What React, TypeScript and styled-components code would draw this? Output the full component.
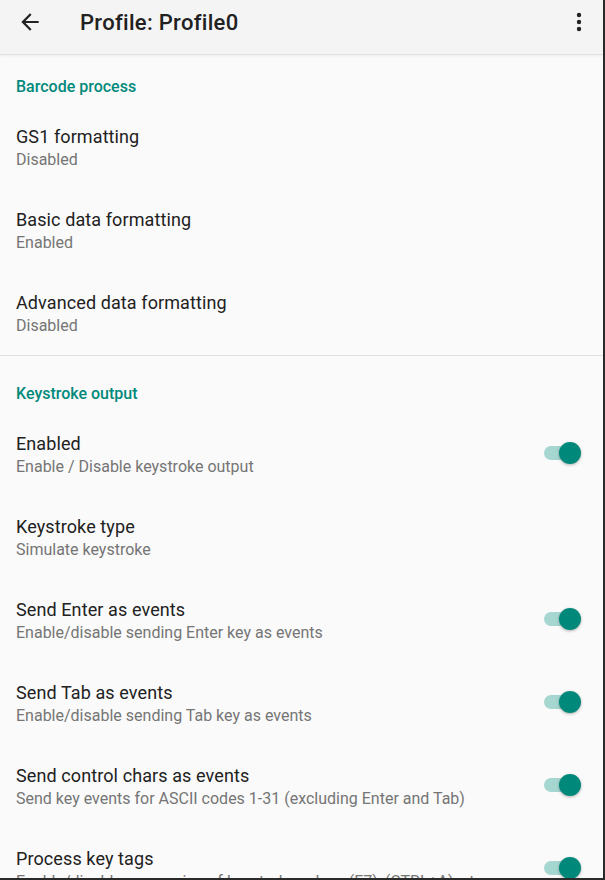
import React from "react";
import styled, { createGlobalStyle } from "styled-components";

const Global = createGlobalStyle`
  html, body { margin: 0; padding: 0; background: #fafafa; }
  body { font-family: Roboto, "Noto Sans", "Liberation Sans", sans-serif; -webkit-font-smoothing: antialiased; }
  * { box-sizing: border-box; }
`;

const Frame = styled.div`
  width: 605px;
  height: 880px;
  overflow: hidden;
  background: #fafafa;
  border-right: 2px solid #2a2a2a;
  border-bottom: 2px solid #2a2a2a;
  display: flex;
  flex-direction: column;
`;

const AppBar = styled.header`
  height: 54px;
  flex: 0 0 54px;
  background: #f4f4f4;
  display: flex;
  align-items: center;
  padding: 0 10px 10px 16px;
  box-shadow: 0 1px 0 #e2e2e2, 0 2px 3px rgba(0,0,0,0.06);
  position: relative;
  z-index: 1;
`;

const IconButton = styled.div`
  width: 28px;
  height: 28px;
  display: flex;
  align-items: center;
  justify-content: center;
  color: #222;
`;

const Title = styled.h1`
  flex: 1;
  margin: 0 0 0 36px;
  font-size: 22px;
  font-weight: 500;
  color: #212121;
  letter-spacing: 0.3px;
`;

const Content = styled.main`
  display: flex;
  flex-direction: column;
`;

const Category = styled.div<{ $top: number }>`
  padding: ${(p) => p.$top}px 16px 9px;
  font-size: 16px;
  line-height: 20px;
  font-weight: 500;
  color: #00897b;
`;

const Divider = styled.div`
  height: 1px;
  background: #e0e0e0;
`;

const Row = styled.div`
  display: flex;
  align-items: center;
  padding: 20px 23px 19px 16px;
  height: 83px;
`;

const Texts = styled.div`
  flex: 1;
  display: flex;
  flex-direction: column;
  min-width: 0;
`;

const RowTitle = styled.div`
  font-size: 18px;
  line-height: 22px;
  color: #212121;
  letter-spacing: 0.1px;
`;

const RowSub = styled.div`
  margin-top: 2px;
  font-size: 16px;
  line-height: 20px;
  color: #757575;
  white-space: nowrap;
`;

const SwitchWrap = styled.div`
  position: relative;
  width: 36px;
  height: 24px;
  display: flex;
  align-items: center;
  margin-top: -4px;
`;

const Track = styled.div`
  width: 34px;
  height: 14px;
  border-radius: 7px;
  background: #a6d6d0;
`;

const Thumb = styled.div`
  position: absolute;
  right: -1px;
  top: 1px;
  width: 22px;
  height: 22px;
  border-radius: 50%;
  background: #00897b;
  box-shadow: 0 1px 3px rgba(0,0,0,0.3);
`;

const Switch = () => (
  <SwitchWrap>
    <Track />
    <Thumb />
  </SwitchWrap>
);

type Item = { title: string; sub: string; toggle?: boolean };

const barcode: Item[] = [
  { title: "GS1 formatting", sub: "Disabled" },
  { title: "Basic data formatting", sub: "Enabled" },
  { title: "Advanced data formatting", sub: "Disabled" },
];

const keystroke: Item[] = [
  { title: "Enabled", sub: "Enable / Disable keystroke output", toggle: true },
  { title: "Keystroke type", sub: "Simulate keystroke" },
  { title: "Send Enter as events", sub: "Enable/disable sending Enter key as events", toggle: true },
  { title: "Send Tab as events", sub: "Enable/disable sending Tab key as events", toggle: true },
  { title: "Send control chars as events", sub: "Send key events for ASCII codes 1-31 (excluding Enter and Tab)", toggle: true },
  { title: "Process key tags", sub: "Enable/disable processing of keystroke values (F7), (CTRL+A), etc", toggle: true },
];

const PrefRow = ({ item }: { item: Item }) => (
  <Row>
    <Texts>
      <RowTitle>{item.title}</RowTitle>
      <RowSub>{item.sub}</RowSub>
    </Texts>
    {item.toggle && <Switch />}
  </Row>
);

export default function App() {
  return (
    <Frame>
      <Global />
      <AppBar>
        <IconButton>
          <svg width="26" height="26" viewBox="0 0 24 24">
            <path d="M20 11H7.83l5.59-5.59L12 4l-8 8 8 8 1.41-1.41L7.83 13H20v-2z" fill="#222" />
          </svg>
        </IconButton>
        <Title>Profile: Profile0</Title>
        <IconButton>
          <svg width="24" height="24" viewBox="0 0 24 24">
            <circle cx="12" cy="5" r="2.2" fill="#222" />
            <circle cx="12" cy="12" r="2.2" fill="#222" />
            <circle cx="12" cy="19" r="2.2" fill="#222" />
          </svg>
        </IconButton>
      </AppBar>
      <Content>
        <Category $top={23}>Barcode process</Category>
        {barcode.map((i) => (
          <PrefRow key={i.title} item={i} />
        ))}
        <Divider />
        <Category $top={28}>Keystroke output</Category>
        {keystroke.map((i) => (
          <PrefRow key={i.title} item={i} />
        ))}
      </Content>
    </Frame>
  );
}
